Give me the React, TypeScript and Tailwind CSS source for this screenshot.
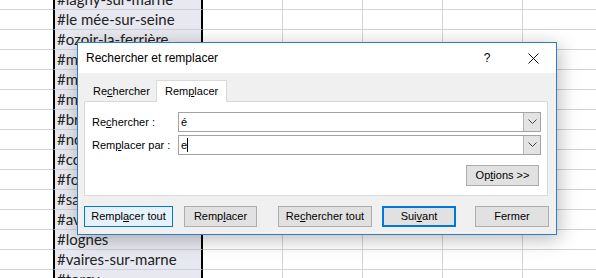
import { ReactNode } from "react";

const cities = [
  "#lagny-sur-marne",
  "#le mée-sur-seine",
  "#ozoir-la-ferrière",
  "#meaux",
  "#melun",
  "#montévrain",
  "#bry-sur-marne",
  "#noisiel",
  "#combs-la-ville",
  "#fontainebleau",
  "#savigny-le-temple",
  "#avon",
  "#lognes",
  "#vaires-sur-marne",
  "#torcy",
];

const Sheet = () => {
  return (
    <div className="flex flex-col -mt-[10px] font-['Lato',sans-serif] text-[15px] text-[#222]">
      {cities.map((city) => (
        <div key={city} className="flex h-[20px]">
          <div className="w-[53px] shrink-0 border-b border-[#d4d4d4] bg-white" />
          <div className="w-[150px] shrink-0 border-x-2 border-x-black border-b border-b-[#cfd1d9] bg-[#e8e9f0] pl-[2px] leading-[19px] whitespace-nowrap overflow-hidden">
            {city}
          </div>
          <div className="w-[80px] shrink-0 border-r border-b border-[#d4d4d4] bg-white" />
          <div className="w-[80px] shrink-0 border-r border-b border-[#d4d4d4] bg-white" />
          <div className="w-[80px] shrink-0 border-r border-b border-[#d4d4d4] bg-white" />
          <div className="w-[80px] shrink-0 border-r border-b border-[#d4d4d4] bg-white" />
          <div className="flex-1 border-b border-[#d4d4d4] bg-white" />
        </div>
      ))}
    </div>
  );
};

const Chevron = () => (
  <svg width="9" height="6" viewBox="0 0 9 6" fill="none">
    <polyline points="0.5,0.5 4.5,4.5 8.5,0.5" stroke="#444" strokeWidth="1" />
  </svg>
);

const ComboBox = ({ value, caret }: { value: string; caret?: boolean }) => (
  <div className="flex-1 h-[20px] flex border border-[#a3a3a3] bg-white">
    <div className="flex-1 flex items-center pl-[2px]">
      <span>{value}</span>
      {caret && <span className="w-px h-[14px] bg-black" />}
    </div>
    <div className="w-[17px] flex items-center justify-center bg-[#e3e3e3] border-l border-[#b5b5b5]">
      <Chevron />
    </div>
  </div>
);

const Button = ({
  children,
  className,
}: {
  children: ReactNode;
  className: string;
}) => (
  <div
    className={`h-[21px] flex items-center justify-center shrink-0 ${className}`}
  >
    {children}
  </div>
);

const FindReplaceDialog = () => {
  return (
    <div className="absolute left-[77px] top-[42px] w-[480px] h-[193px] border border-[#2f7cc2] bg-[#f0f0f0] shadow-[2px_4px_18px_rgba(0,0,0,0.28)] flex flex-col font-['Liberation_Sans',Arial,sans-serif] text-[11px] text-black">
      <div className="h-[30px] shrink-0 bg-white flex items-center">
        <span className="pl-[8px] text-[12px]">Rechercher et remplacer</span>
        <span className="ml-auto w-[46px] text-center text-[12px]">?</span>
        <span className="w-[46px] flex items-center justify-center">
          <svg width="11" height="11" viewBox="0 0 11 11">
            <line x1="0.5" y1="0.5" x2="10.5" y2="10.5" stroke="#111" strokeWidth="1" />
            <line x1="10.5" y1="0.5" x2="0.5" y2="10.5" stroke="#111" strokeWidth="1" />
          </svg>
        </span>
      </div>

      <div className="flex-1 flex flex-col pl-[6px] pt-[6px]">
        <div className="flex items-end h-[22px]">
          <div className="w-[72px] h-[19px] flex items-center pl-[9px]">
            <span>
              Re<u>c</u>hercher
            </span>
          </div>
          <div className="w-[71px] h-[22px] -mb-px relative z-10 flex items-center pl-[8px] bg-white border-x border-t border-[#d9d9d9]">
            <span>
              Rem<u>p</u>lacer
            </span>
          </div>
        </div>

        <div className="w-[464px] h-[95px] border border-[#d9d9d9] bg-white flex flex-col pl-[7px] pr-[6px] pt-[10px]">
          <div className="flex items-center">
            <span className="w-[86px]">
              Re<u>c</u>hercher :
            </span>
            <ComboBox value="é" />
          </div>
          <div className="flex items-center mt-[3px]">
            <span className="w-[86px]">
              Rem<u>p</u>lacer par :
            </span>
            <ComboBox value="e" caret />
          </div>
          <div className="flex justify-end mt-[10px] pr-[2px]">
            <Button className="w-[73px] bg-[#e1e1e1] border border-[#adadad]">
              <span>
                Op<u>t</u>ions &gt;&gt;
              </span>
            </Button>
          </div>
        </div>

        <div className="flex mt-[10px]">
          <Button className="w-[89px] bg-[#e5f1fb] border border-[#0078d7]">
            <span>
              Rempl<u>a</u>cer tout
            </span>
          </Button>
          <Button className="w-[73px] ml-[11px] bg-[#e1e1e1] border border-[#adadad]">
            <span>
              Remp<u>l</u>acer
            </span>
          </Button>
          <Button className="w-[94px] ml-[21px] bg-[#e1e1e1] border border-[#adadad]">
            <span>
              Re<u>c</u>hercher tout
            </span>
          </Button>
          <Button className="w-[74px] ml-[10px] bg-[#e1e1e1] border-2 border-[#0078d7]">
            <span>
              Sui<u>v</u>ant
            </span>
          </Button>
          <Button className="w-[74px] ml-[19px] bg-[#e1e1e1] border border-[#adadad]">
            <span>Fermer</span>
          </Button>
        </div>
      </div>
    </div>
  );
};

export default function App() {
  return (
    <div className="relative w-[596px] h-[278px] overflow-hidden bg-white">
      <Sheet />
      <FindReplaceDialog />
    </div>
  );
}
